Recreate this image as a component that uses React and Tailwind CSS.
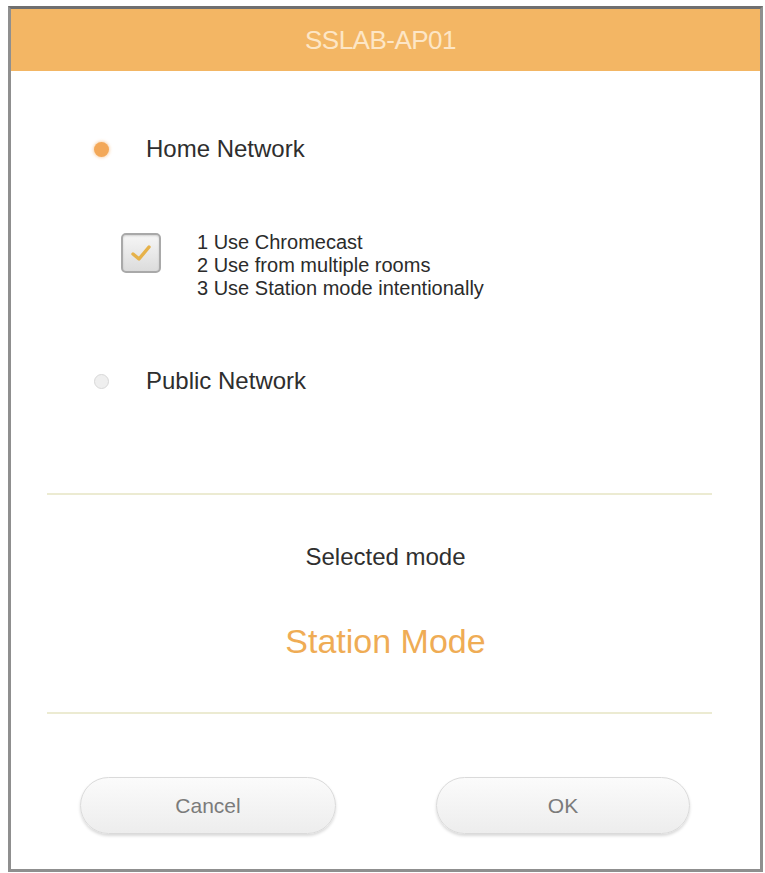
import React, { useState } from 'react';

const font = { fontFamily: '"Liberation Sans", Arial, Helvetica, sans-serif' };

const Radio = ({ checked }) => (
  <span
    className={`block h-[15px] w-[15px] shrink-0 rounded-full ${
      checked
        ? 'bg-[#f3a858] shadow-[0_0_3px_1px_rgba(243,168,88,0.45)]'
        : 'border border-[#d8d8d8] bg-[#efefef]'
    }`}
  />
);

const CheckBox = ({ checked }) => (
  <span className="mt-[2px] flex h-[40px] w-[40px] shrink-0 items-center justify-center rounded-[5px] border-2 border-[#a9a9a9] bg-gradient-to-b from-[#f6f6f6] to-[#dcdcdc] shadow-[inset_0_1px_2px_rgba(0,0,0,0.15)]">
    {checked && (
      <svg width="22" height="20" viewBox="0 0 22 20" fill="none">
        <path d="M3 11 L9 16 L19 4" stroke="#e6b24a" strokeWidth="3.4" strokeLinecap="round" strokeLinejoin="round" />
      </svg>
    )}
  </span>
);

export default function App() {
  const [mode, setMode] = useState('home');

  return (
    <div className="min-h-[873px] w-[765px] bg-white" style={font}>
      <div className="ml-[8px] mt-[6px] flex h-[866px] w-[755px] flex-col border-[3px] border-[#8f8f8f] border-t-[#6f6f6f] bg-white">
        <div className="flex h-[62px] shrink-0 items-center justify-center bg-[#f3b664] pr-[10px]">
          <span className="text-[26px] tracking-[-0.5px] text-[#fde6c6]">SSLAB-AP01</span>
        </div>

        <div className="pl-[83px]">
          <button
            onClick={() => setMode('home')}
            className="mt-[66px] flex h-[24px] items-center"
          >
            <Radio checked={mode === 'home'} />
            <span className="ml-[37px] text-[24px] text-[#2e2e2e]">Home Network</span>
          </button>

          <div className="ml-[27px] mt-[70px] flex items-start">
            <CheckBox checked />
            <ul className="ml-[36px] text-[20px] leading-[23px] text-[#2b2b2b]">
              <li>1 Use Chromecast</li>
              <li>2 Use from multiple rooms</li>
              <li>3 Use Station mode intentionally</li>
            </ul>
          </div>

          <button
            onClick={() => setMode('public')}
            className="mt-[69px] flex h-[24px] items-center"
          >
            <Radio checked={mode === 'public'} />
            <span className="ml-[37px] text-[24px] text-[#2e2e2e]">Public Network</span>
          </button>
        </div>

        <div className="ml-[36px] mt-[100px] h-[2px] w-[665px] bg-[#ecebd2]" />

        <p className="mt-[50px] text-center text-[24px] leading-[24px] text-[#2f2f2f]">
          Selected mode
        </p>
        <p className="mt-[54px] text-center text-[34px] leading-[36px] text-[#efac55]">
          Station Mode
        </p>

        <div className="ml-[36px] mt-[53px] h-[2px] w-[665px] bg-[#ecebd2]" />

        <div className="ml-[69px] mt-[63px] flex gap-[100px]">
          <button className="h-[57px] w-[256px] rounded-full border border-[#dadada] bg-gradient-to-b from-[#fbfbfb] to-[#ededed] text-[21px] text-[#7b7b7b] shadow-[0_2px_3px_rgba(0,0,0,0.15)]">
            Cancel
          </button>
          <button className="h-[57px] w-[254px] rounded-full border border-[#dadada] bg-gradient-to-b from-[#fbfbfb] to-[#ededed] text-[21px] text-[#7b7b7b] shadow-[0_2px_3px_rgba(0,0,0,0.15)]">
            OK
          </button>
        </div>
      </div>
    </div>
  );
}
